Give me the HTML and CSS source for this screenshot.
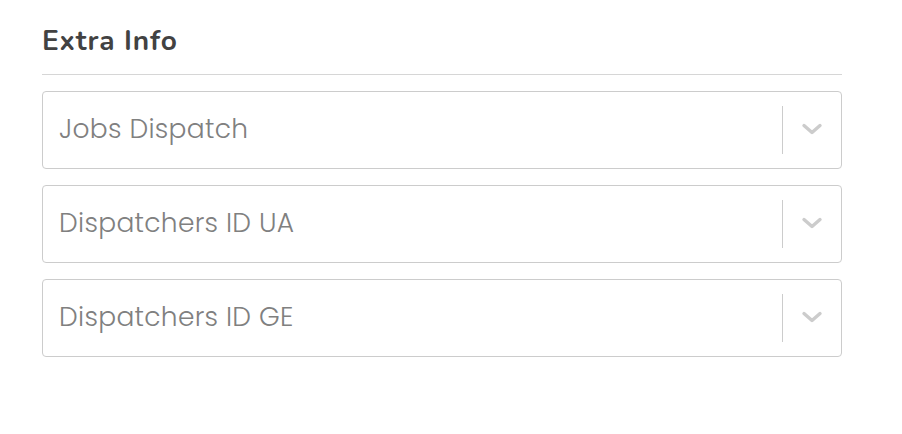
FILE: index.html
```html
<!DOCTYPE html>
<html>
<head>
<meta charset="utf-8">
<link rel="stylesheet" href="styles.css">
</head>
<body>
<section class="panel">
  <h2 class="title">Extra Info</h2>
  <div class="fields">
    <div class="select">
      <div class="value">Jobs Dispatch</div>
      <span class="sep"></span>
      <span class="indicator"><svg width="24" height="14" viewBox="0 0 24 14"><path d="M4 3.5 L12 10.5 L20 3.5" fill="none" stroke="#cccccc" stroke-width="3.4" stroke-linecap="round" stroke-linejoin="round"/></svg></span>
    </div>
    <div class="select">
      <div class="value">Dispatchers ID UA</div>
      <span class="sep"></span>
      <span class="indicator"><svg width="24" height="14" viewBox="0 0 24 14"><path d="M4 3.5 L12 10.5 L20 3.5" fill="none" stroke="#cccccc" stroke-width="3.4" stroke-linecap="round" stroke-linejoin="round"/></svg></span>
    </div>
    <div class="select">
      <div class="value">Dispatchers ID GE</div>
      <span class="sep"></span>
      <span class="indicator"><svg width="24" height="14" viewBox="0 0 24 14"><path d="M4 3.5 L12 10.5 L20 3.5" fill="none" stroke="#cccccc" stroke-width="3.4" stroke-linecap="round" stroke-linejoin="round"/></svg></span>
    </div>
  </div>
</section>
</body>
</html>
```
FILE: styles.css
```css
html, body {
  margin: 0;
  padding: 0;
  background: #ffffff;
}
.panel {
  width: 800px;
  padding: 23px 0 0 42px;
}
.title {
  margin: 0;
  font-family: "Nunito", "Lato", "Open Sans", sans-serif;
  font-weight: 700;
  font-size: 28px;
  line-height: 36px;
  letter-spacing: 0.9px;
  color: #424242;
  padding-bottom: 15px;
  border-bottom: 1px solid #d6d6d6;
}
.fields {
  display: flex;
  flex-direction: column;
  gap: 16px;
  padding-top: 16px;
}
.select {
  display: flex;
  align-items: stretch;
  height: 76px;
  border: 1px solid #cccccc;
  border-radius: 4px;
}
.value {
  flex: 1;
  display: flex;
  align-items: center;
  padding-left: 16px;
  padding-bottom: 3px;
  font-family: "Poppins", "Open Sans", sans-serif;
  font-weight: 300;
  font-size: 26.5px;
  letter-spacing: 0.3px;
  color: #808080;
}
.sep {
  width: 1px;
  background: #cccccc;
  margin: 14px 0;
}
.indicator {
  width: 58px;
  display: flex;
  align-items: center;
  justify-content: center;
  padding-bottom: 2px;
}
```
